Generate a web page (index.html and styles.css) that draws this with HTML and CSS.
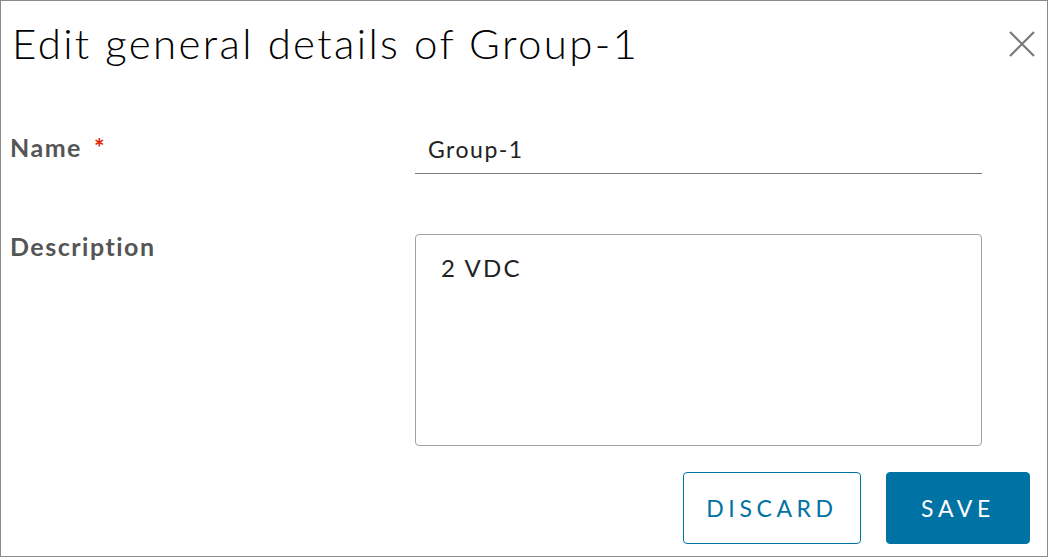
FILE: index.html
```html
<!DOCTYPE html>
<html>
    <head>
        <link rel="stylesheet" href="styles.css">
    </head>
    <body>
        <div id="modal">
            <div class="modal-header">
                <h3 class="modal-title">Edit general details of Group-1</h3>
                <button class="close" aria-label="Close">
                    <svg width="26" height="26" viewBox="0 0 26 26">
                        <path d="M1 1 L25 25 M25 1 L1 25" stroke="#7a7a7a" stroke-width="2.2" fill="none"/>
                    </svg>
                </button>
            </div>
            <form class="modal-body">
                <div class="form-row">
                    <label for="name" class="required">Name</label>
                    <input type="text" id="name" value="Group-1">
                </div>
                <div class="form-row">
                    <label for="description">Description</label>
                    <textarea id="description">2 VDC</textarea>
                </div>
            </form>
            <div class="modal-footer">
                <button class="btn btn-outline">Discard</button>
                <button class="btn btn-primary">Save</button>
            </div>
        </div>
    </body>
</html>
```

FILE: styles.css
```css
html, body{
    margin:0;
    padding:0;
    background-color:#fff;
}

body{
    font-family: 'Lato', sans-serif;
    color:#000;
}

#modal{
    box-sizing: border-box;
    width:1048px;
    height:557px;
    border:1px solid #8a8a8a;
    display: flex;
    flex-direction: column;
}

.modal-header{
    display: flex;
    justify-content: space-between;
    align-items: flex-start;
    padding: 16px 12px 0 11px;
}

.modal-title{
    margin:0;
    font-size: 42px;
    font-weight: 300;
    letter-spacing: 2.35px;
    line-height: 52px;
    color:#000;
}

.close{
    background: none;
    border:0;
    padding:0;
    margin: 14px 0 0 0;
    cursor:pointer;
}

.modal-body{
    display: flex;
    flex-direction: column;
    margin: 0;
    padding: 0 65px 0 9px;
}

.form-row{
    display: flex;
}

.form-row:first-child{
    margin-top: 66px;
}

.form-row + .form-row{
    margin-top: 60px;
}

.form-row > label{
    width:405px;
    margin-top: -3px;
    font-size: 25px;
    font-weight: 700;
    letter-spacing: 1.5px;
    color:#555;
}

.form-row > label.required::after{
    content: "*";
    color:#e12200;
    margin-left: 12px;
}

#name{
    flex:1;
    border:0;
    border-bottom:1px solid #737c80;
    font-family: 'Lato', sans-serif;
    font-size: 23px;
    letter-spacing: 1.5px;
    color:#222;
    padding: 0 13px 11px 13px;
    height: 39px;
    box-sizing: border-box;
    outline: none;
}

#description{
    flex:1;
    height:212px;
    box-sizing: border-box;
    border:1px solid #9aa2a6;
    border-radius: 4px;
    font-family: 'Lato', sans-serif;
    font-size: 24px;
    letter-spacing: 2.2px;
    color:#222;
    padding: 18px 25px;
    resize: none;
    outline: none;
}

.modal-footer{
    display: flex;
    justify-content: flex-end;
    gap: 25px;
    padding: 26px 17px 0 0;
}

.btn{
    height:72px;
    box-sizing: border-box;
    border-radius: 4px;
    font-family: 'Lato', sans-serif;
    font-size: 23px;
    letter-spacing: 4.6px;
    text-transform: uppercase;
    cursor:pointer;
}

.btn-outline{
    width:178px;
    background-color: #fff;
    border:1px solid #0072a3;
    color:#0072a3;
}

.btn-primary{
    width:144px;
    background-color: #0072a3;
    border:1px solid #0072a3;
    color:#fff;
}
```
